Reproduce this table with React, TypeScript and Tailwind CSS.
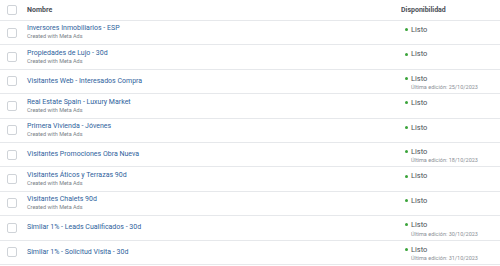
const ROWS: { name: string; meta?: boolean; edited?: string }[] = [
  { name: 'Inversores Inmobiliarios - ESP', meta: true },
  { name: 'Propiedades de Lujo - 30d', meta: true },
  { name: 'Visitantes Web - Interesados Compra', edited: '25/10/2023' },
  { name: 'Real Estate Spain - Luxury Market', meta: true },
  { name: 'Primera Vivienda - Jóvenes', meta: true },
  { name: 'Visitantes Promociones Obra Nueva', edited: '18/10/2023' },
  { name: 'Visitantes Áticos y Terrazas 90d', meta: true },
  { name: 'Visitantes Chalets 90d', meta: true },
  { name: 'Similar 1% - Leads Cualificados - 30d', edited: '30/10/2023' },
  { name: 'Similar 1% - Solicitud Visita - 30d', edited: '31/10/2023' },
];

function Checkbox() {
  return <span className="block h-[10px] w-[10px] rounded-[2px] border border-[#cfd3d8] bg-white" />;
}

export default function App() {
  return (
    <main className="h-[266px] w-[500px] overflow-hidden bg-white font-['Roboto',sans-serif] text-[#1c1e21]">
      <div className="flex h-[21px] items-center border-b border-[#e6e8eb]">
        <div className="flex w-[27px] shrink-0 justify-center pr-[3px]">
          <Checkbox />
        </div>
        <div className="flex-1 text-[7px] font-bold text-[#4b4f56]">Nombre</div>
        <div className="w-[99px] shrink-0 text-[7px] font-bold text-[#4b4f56]">Disponibilidad</div>
      </div>
      {ROWS.map((r) => (
        <div key={r.name} className="flex h-[24.4px] border-b border-[#e6e8eb]">
          <div className="flex w-[27px] shrink-0 items-center justify-center pr-[3px]">
            <Checkbox />
          </div>
          <div className="flex flex-1 flex-col justify-center leading-none">
            <span className="text-[7px] text-[#2e5f9c]">{r.name}</span>
            {r.meta && <span className="mt-[2px] text-[5.5px] text-[#7a7f87]">Created with Meta Ads</span>}
          </div>
          <div className="w-[99px] shrink-0 pt-[5px] leading-none">
            <div className="flex items-center gap-[3px]">
              <span className="ml-[4px] h-[3px] w-[3px] rounded-full bg-[#3aa33a]" />
              <span className="text-[7.5px] text-[#4b4f56]">Listo</span>
            </div>
            {r.edited && (
              <div className="mt-[3px] pl-[10px] text-[5.5px] text-[#8a8f96]">Última edición: {r.edited}</div>
            )}
          </div>
        </div>
      ))}
    </main>
  );
}
